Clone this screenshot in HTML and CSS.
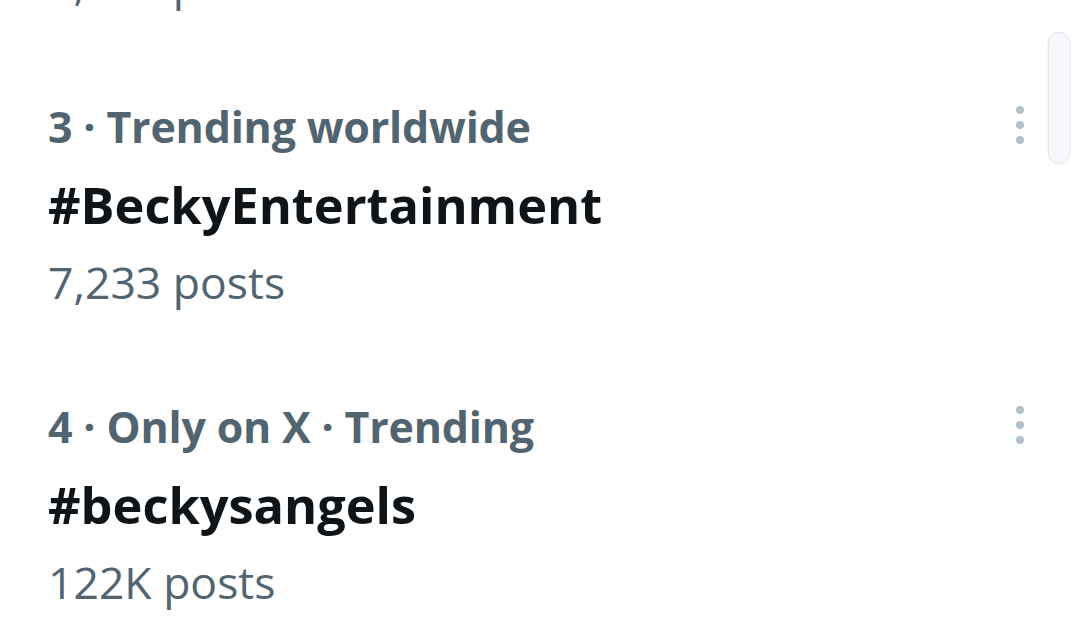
FILE: index.html
```html
<!DOCTYPE html>
<html>
<head>
<meta charset="utf-8">
<link rel="stylesheet" href="styles.css">
</head>
<body>
<div class="feed">
  <div class="trend trend-cut">
    <div class="posts">7,017 posts</div>
  </div>
  <div class="trend">
    <div class="trend-text">
      <div class="meta">3 · Trending worldwide</div>
      <div class="title">#BeckyEntertainment</div>
      <div class="posts">7,233 posts</div>
    </div>
    <div class="more"><span></span><span></span><span></span></div>
  </div>
  <div class="trend">
    <div class="trend-text">
      <div class="meta">4 · Only on X · Trending</div>
      <div class="title">#beckysangels</div>
      <div class="posts">122K posts</div>
    </div>
    <div class="more"><span></span><span></span><span></span></div>
  </div>
</div>
<div class="scrollbar"></div>
</body>
</html>
```
FILE: styles.css
```css
html, body {
  margin: 0;
  padding: 0;
  background: #ffffff;
  width: 1080px;
  height: 637px;
  overflow: hidden;
}
body {
  font-family: "Open Sans", "Noto Sans", sans-serif;
  position: relative;
}
.feed {
  display: flex;
  flex-direction: column;
  padding-left: 48px;
  padding-right: 52px;
}
.trend {
  display: flex;
  justify-content: space-between;
  align-items: flex-start;
  padding-top: 33px;
  padding-bottom: 34px;
}
.trend-cut {
  margin-top: -56px;
  padding-top: 0;
  padding-bottom: 33px;
}
.trend-text {
  display: flex;
  flex-direction: column;
}
.meta {
  color: #536471;
  font-size: 43px;
  font-weight: 700;
  line-height: 78px;
  letter-spacing: -0.2px;
}
.title {
  color: #0f1419;
  font-size: 50.5px;
  font-weight: 700;
  line-height: 77px;
}
.posts {
  color: #536471;
  font-size: 44.5px;
  font-weight: 400;
  line-height: 78px;
}
.more {
  display: flex;
  flex-direction: column;
  gap: 7px;
  padding-top: 18px;
  width: 8px;
  margin-right: 4px;
}
.more span {
  display: block;
  width: 8px;
  height: 8px;
  border-radius: 50%;
  background: #b3c0ca;
}
.scrollbar {
  position: absolute;
  left: 1048px;
  top: 32px;
  width: 22px;
  height: 132px;
  border-radius: 11px;
  background: #f6f8fc;
  border: 1px solid #e4e7ec;
  box-shadow: 0 0 3px rgba(0, 0, 0, 0.06);
  box-sizing: border-box;
}
```
